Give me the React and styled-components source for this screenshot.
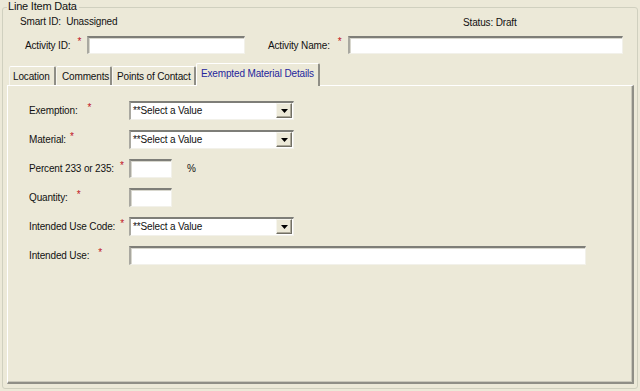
import React from "react";
import styled, { createGlobalStyle } from "styled-components";

const GlobalStyle = createGlobalStyle`
  html, body { margin: 0; padding: 0; }
  body {
    background: #ECE9D8;
    font-family: "Liberation Sans", Arial, sans-serif;
    font-size: 10px;
    letter-spacing: -0.15px;
    color: #111;
  }
  * { box-sizing: border-box; }
`;

const Page = styled.div`
  width: 640px;
  height: 391px;
  padding: 7px 2px 2px 2px;
  background: #ECE9D8;
`;

const GroupBox = styled.section`
  position: relative;
  height: 100%;
  border: 1px solid #D0D0BF;
  border-radius: 3px;
  display: flex;
  flex-direction: column;
`;

const Legend = styled.div`
  position: absolute;
  top: -8px;
  left: 4px;
  padding: 0 2px 0 1px;
  background: #ECE9D8;
  line-height: 13px;
  font-size: 11px;
  letter-spacing: -0.2px;
`;

const InfoRow = styled.div`
  display: flex;
  margin-top: 7px;
  padding-left: 17px;
  height: 13px;
  line-height: 13px;
  white-space: nowrap;
`;

const Smart = styled.span`
  width: 443px;
`;

const Status = styled.span`
  margin-top: 1px;
`;

const ActivityRow = styled.div`
  display: flex;
  align-items: center;
  margin-top: 8px;
  height: 18px;
`;

const InlineLabel = styled.span`
  margin-left: ${(p) => p.$ml}px;
  width: ${(p) => p.$w}px;
  display: inline-flex;
  align-items: center;
  white-space: nowrap;
`;

const Star = styled.span`
  color: #C0141E;
  font-size: 10px;
  line-height: 8px;
  position: relative;
  top: ${(p) => p.$top ?? -3}px;
  margin-left: ${(p) => p.$ml ?? 0}px;
`;

const TextBox = styled.div`
  width: ${(p) => p.$w}px;
  height: ${(p) => p.$h ?? 18}px;
  background: #fff;
  border-top: 2px solid #7E7E78;
  border-left: 2px solid #A9A8A0;
  border-right: 1px solid #F2F1EA;
  border-bottom: 1px solid #F2F1EA;
  box-shadow: inset 1px 1px 0 #D8D7CE;
`;

const TabArea = styled.div`
  flex: 1;
  display: flex;
  flex-direction: column;
  margin: 8px 3px 4px 4px;
`;

const TabStrip = styled.div`
  display: flex;
  align-items: flex-end;
  height: 23px;
  padding-left: 2px;
  position: relative;
  z-index: 1;
`;

const Tab = styled.div`
  width: ${(p) => p.$w}px;
  height: ${(p) => (p.$active ? 23 : 19)}px;
  margin-bottom: ${(p) => (p.$active ? -1 : 0)}px;
  background: #ECE9D8;
  border-top: 1px solid #FFFFFF;
  border-left: 1px solid ${(p) => (p.$active ? "#FFFFFF" : "#F7F6F0")};
  border-right: 2px solid #8F8E86;
  border-top-left-radius: 2px;
  border-top-right-radius: 2px;
  color: ${(p) => (p.$active ? "#25259C" : "#111")};
  display: flex;
  align-items: center;
  padding-left: ${(p) => p.$pl}px;
  padding-bottom: ${(p) => (p.$active ? 3 : 0)}px;
  white-space: nowrap;
`;

const Panel = styled.div`
  flex: 1;
  border-top: 1px solid #FFFFFF;
  border-left: 1px solid #FFFFFF;
  border-right: 2px solid #8F8E86;
  border-bottom: 2px solid #8F8E86;
  box-shadow: inset -1px -1px 0 #C9C7BA;
  padding: 15px 0 0 21px;
  display: flex;
  flex-direction: column;
  gap: 11px;
`;

const FormRow = styled.div`
  display: flex;
  align-items: center;
  height: 18px;
`;

const FieldLabel = styled.div`
  width: 100px;
  display: flex;
  align-items: center;
  white-space: nowrap;
`;

const SelectBox = styled.div`
  width: 165px;
  height: 19px;
  background: #fff;
  border-top: 2px solid #7E7E78;
  border-left: 2px solid #A9A8A0;
  border-right: 1px solid #F2F1EA;
  border-bottom: 1px solid #F2F1EA;
  display: flex;
  align-items: center;
  padding: 1px;
`;

const SelectText = styled.span`
  flex: 1;
  padding-left: 1px;
  line-height: 13px;
  white-space: nowrap;
`;

const DropButton = styled.div`
  width: 16px;
  height: 15px;
  background: #ECE9D8;
  border-top: 1px solid #F6F5EE;
  border-left: 1px solid #F6F5EE;
  border-right: 1px solid #716F64;
  border-bottom: 1px solid #716F64;
  box-shadow: inset -1px -1px 0 #ACA899;
  display: flex;
  align-items: center;
  justify-content: center;
`;

const Percent = styled.span`
  margin-left: 15px;
`;

const Select = () => (
  <SelectBox>
    <SelectText>**Select a Value</SelectText>
    <DropButton>
      <svg width="7" height="4" viewBox="0 0 7 4">
        <path d="M0 0h7L3.5 4z" fill="#000" />
      </svg>
    </DropButton>
  </SelectBox>
);

const rows = [
  { label: "Exemption:", gap: 10, kind: "select" },
  { label: "Material:", gap: 4, kind: "select" },
  { label: "Percent 233 or 235:", gap: 6, kind: "percent" },
  { label: "Quantity:", gap: 9, kind: "small" },
  { label: "Intended Use Code:", gap: 5, kind: "select" },
  { label: "Intended Use:", gap: 9, kind: "wide" },
];

const tabs = [
  { name: "Location", w: 47, pl: 3 },
  { name: "Comments", w: 56, pl: 5 },
  { name: "Points of Contact", w: 84, pl: 4 },
  { name: "Exempted Material Details", w: 124, pl: 4, active: true },
];

export default function App() {
  return (
    <>
      <GlobalStyle />
      <Page>
        <GroupBox>
          <Legend>Line Item Data</Legend>
          <InfoRow>
            <Smart>Smart ID:&nbsp; Unassigned</Smart>
            <Status>Status: Draft</Status>
          </InfoRow>
          <ActivityRow>
            <InlineLabel $ml={22} $w={62}>
              Activity ID:<Star $ml={7}>*</Star>
            </InlineLabel>
            <TextBox $w={158} />
            <InlineLabel $ml={23} $w={80}>
              Activity Name:<Star $ml={8}>*</Star>
            </InlineLabel>
            <TextBox $w={275} />
          </ActivityRow>
          <TabArea>
            <TabStrip>
              {tabs.map((t) => (
                <Tab key={t.name} $w={t.w} $pl={t.pl} $active={t.active}>
                  {t.name}
                </Tab>
              ))}
            </TabStrip>
            <Panel>
              {rows.map((r) => (
                <FormRow key={r.label}>
                  <FieldLabel>
                    {r.label}
                    <Star $ml={r.gap} $top={-2}>*</Star>
                  </FieldLabel>
                  {r.kind === "select" && <Select />}
                  {r.kind === "percent" && (
                    <>
                      <TextBox $w={43} $h={19} />
                      <Percent>%</Percent>
                    </>
                  )}
                  {r.kind === "small" && <TextBox $w={43} $h={19} />}
                  {r.kind === "wide" && <TextBox $w={457} $h={19} />}
                </FormRow>
              ))}
            </Panel>
          </TabArea>
        </GroupBox>
      </Page>
    </>
  );
}
